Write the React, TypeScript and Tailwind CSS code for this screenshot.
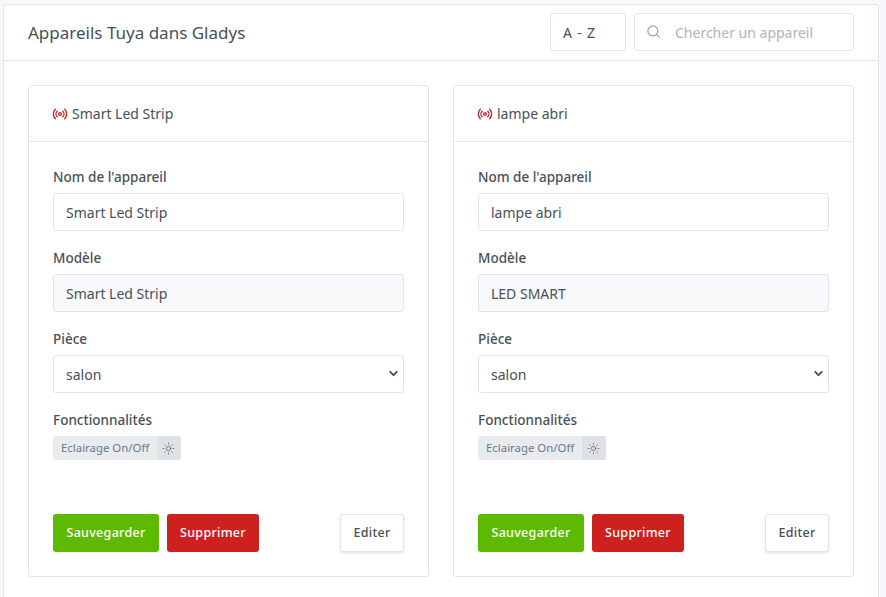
import React from 'react';
import { ChevronDown, Radio, Search, Sun } from 'lucide-react';

interface Device {
  name: string;
  model: string;
  room: string;
}

const devices: Device[] = [
  { name: 'Smart Led Strip', model: 'Smart Led Strip', room: 'salon' },
  { name: 'lampe abri', model: 'LED SMART', room: 'salon' },
];

const fieldClass =
  'block w-full h-[38px] px-3 rounded-[3px] border border-[#e0e5ec] text-[14px] text-[#495057] outline-none';

const Label = ({ children }: { children: React.ReactNode }) => (
  <label className="block pt-px mb-[5px] text-[13.5px] leading-[21px] font-medium text-[#495057]">{children}</label>
);

const DeviceCard = ({ device }: { device: Device }) => (
  <div className="flex-1 min-w-0 h-[492px] flex flex-col bg-white border border-[#e0e5ec] rounded-[3px]">
    <div className="h-14 flex items-center px-6 border-b border-[#e0e5ec] text-[14px] text-[#495057]">
      <Radio size={16} strokeWidth={2} className="text-[#cd201f] mr-1 -ml-px" />
      <span>{device.name}</span>
    </div>
    <div className="flex-1 flex flex-col p-6">
      <div className="mb-4">
        <Label>Nom de l'appareil</Label>
        <input className={`${fieldClass} bg-white`} defaultValue={device.name} />
      </div>
      <div className="mb-4">
        <Label>Modèle</Label>
        <input className={`${fieldClass} bg-[#f8f9fa]`} defaultValue={device.model} disabled />
      </div>
      <div className="mb-4">
        <Label>Pièce</Label>
        <div className="relative">
          <select className={`${fieldClass} bg-white appearance-none`} defaultValue={device.room}>
            <option value="salon">salon</option>
          </select>
          <ChevronDown size={13} strokeWidth={3.5} className="absolute right-[4px] top-[12px] text-[#495057]" />
        </div>
      </div>
      <div>
        <Label>Fonctionnalités</Label>
        <div className="flex w-fit h-6 rounded-[3px] overflow-hidden bg-[#e9ecef] text-[11.4px] text-[#6e7687]">
          <span className="flex items-center px-2">Eclairage On/Off</span>
          <span className="flex items-center justify-center w-6 bg-[#dee2e6]">
            <Sun size={13} strokeWidth={1.25} className="text-[#495057] -ml-px" />
          </span>
        </div>
      </div>
      <div className="mt-auto flex items-center gap-2">
        <button className="h-[38px] w-[106px] rounded-[3px] bg-[#5eba00] text-white text-[12.5px] font-medium tracking-[0.3px]">
          Sauvegarder
        </button>
        <button className="h-[38px] w-[92px] rounded-[3px] bg-[#cd201f] text-white text-[12.5px] font-medium tracking-[0.3px]">
          Supprimer
        </button>
        <button className="ml-auto h-[38px] w-16 rounded-[3px] bg-white border border-[#e0e5ec] shadow-sm text-[#495057] text-[12.5px] font-medium tracking-[0.3px]">
          Editer
        </button>
      </div>
    </div>
  </div>
);

const App = () => {
  return (
    <div className="h-[597px] overflow-hidden bg-[#f5f7fb] pt-1 pl-[3px] pr-[7px] font-['Noto_Sans','Open_Sans',sans-serif]">
      <div className="h-[640px] bg-white border border-[#e0e5ec] rounded-[3px]">
        <div className="h-14 flex items-center pl-6 pr-6 border-b border-[#e0e5ec]">
          <h3 className="text-[17px] text-[#495057]">Appareils Tuya dans Gladys</h3>
          <div className="ml-auto self-start mt-2 flex items-center gap-2">
            <div className="w-[76px] h-[38px] flex items-center px-3 rounded-[3px] border border-[#e0e5ec] text-[14px] tracking-[0.8px] text-[#495057]">
              A - Z
            </div>
            <div className="relative w-[220px]">
              <Search size={15} strokeWidth={2} className="absolute left-[12px] top-[11px] text-[#9aa0ac]" />
              <input
                className="block w-full h-[38px] pl-10 pr-3 rounded-[3px] border border-[#e0e5ec] text-[14px] text-[#495057] placeholder:text-[#adb5bd] outline-none"
                placeholder="Chercher un appareil"
              />
            </div>
          </div>
        </div>
        <div className="flex gap-6 p-6">
          {devices.map((device) => (
            <DeviceCard key={device.name} device={device} />
          ))}
        </div>
      </div>
    </div>
  );
};

export default App;
